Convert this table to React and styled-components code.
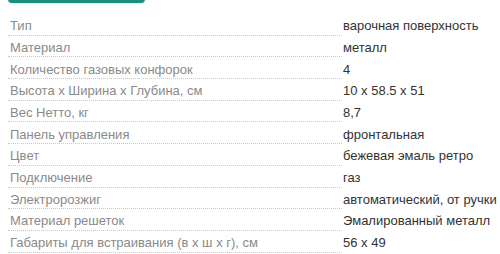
import React from "react";
import styled, { createGlobalStyle } from "styled-components";

const Global = createGlobalStyle`
  html, body { margin: 0; padding: 0; background: #fff; }
  body { font-family: "Liberation Sans", Arial, sans-serif; }
`;

const Page = styled.div`
  width: 500px;
  height: 254px;
  overflow: hidden;
  padding: 0 0 0 8px;
  box-sizing: border-box;
`;

const TabButton = styled.div`
  width: 137px;
  height: 30px;
  margin-top: -27px;
  border-radius: 4px;
  background: #17917e;
  box-shadow: 0 1px 2px rgba(0, 0, 0, 0.12);
`;

const Specs = styled.dl`
  margin: 11px 0 0;
  display: grid;
  grid-template-columns: 334px 1fr;
  font-size: 13px;
  line-height: 15px;
`;

const Label = styled.dt`
  margin: 0;
  padding: 4.2px 0 1.5px 2px;
  color: #8a8a8a;
  border-bottom: 1px dotted #c8c8c8;
  white-space: nowrap;
  overflow: hidden;
`;

const Value = styled.dd`
  margin: 0;
  padding: 4.2px 0 2.5px 1px;
  color: #333;
  white-space: nowrap;
`;

const rows = [
  ["Тип", "варочная поверхность"],
  ["Материал", "металл"],
  ["Количество газовых конфорок", "4"],
  ["Высота х Ширина х Глубина, см", "10 x 58.5 x 51"],
  ["Вес Нетто, кг", "8,7"],
  ["Панель управления", "фронтальная"],
  ["Цвет", "бежевая эмаль ретро"],
  ["Подключение", "газ"],
  ["Электророзжиг", "автоматический, от ручки"],
  ["Материал решеток", "Эмалированный металл"],
  ["Габариты для встраивания (в х ш х г), см", "56 х 49"],
];

export default function App() {
  return (
    <Page>
      <Global />
      <TabButton />
      <Specs>
        {rows.map(([k, v]) => (
          <React.Fragment key={k}>
            <Label>{k}</Label>
            <Value>{v}</Value>
          </React.Fragment>
        ))}
      </Specs>
    </Page>
  );
}
